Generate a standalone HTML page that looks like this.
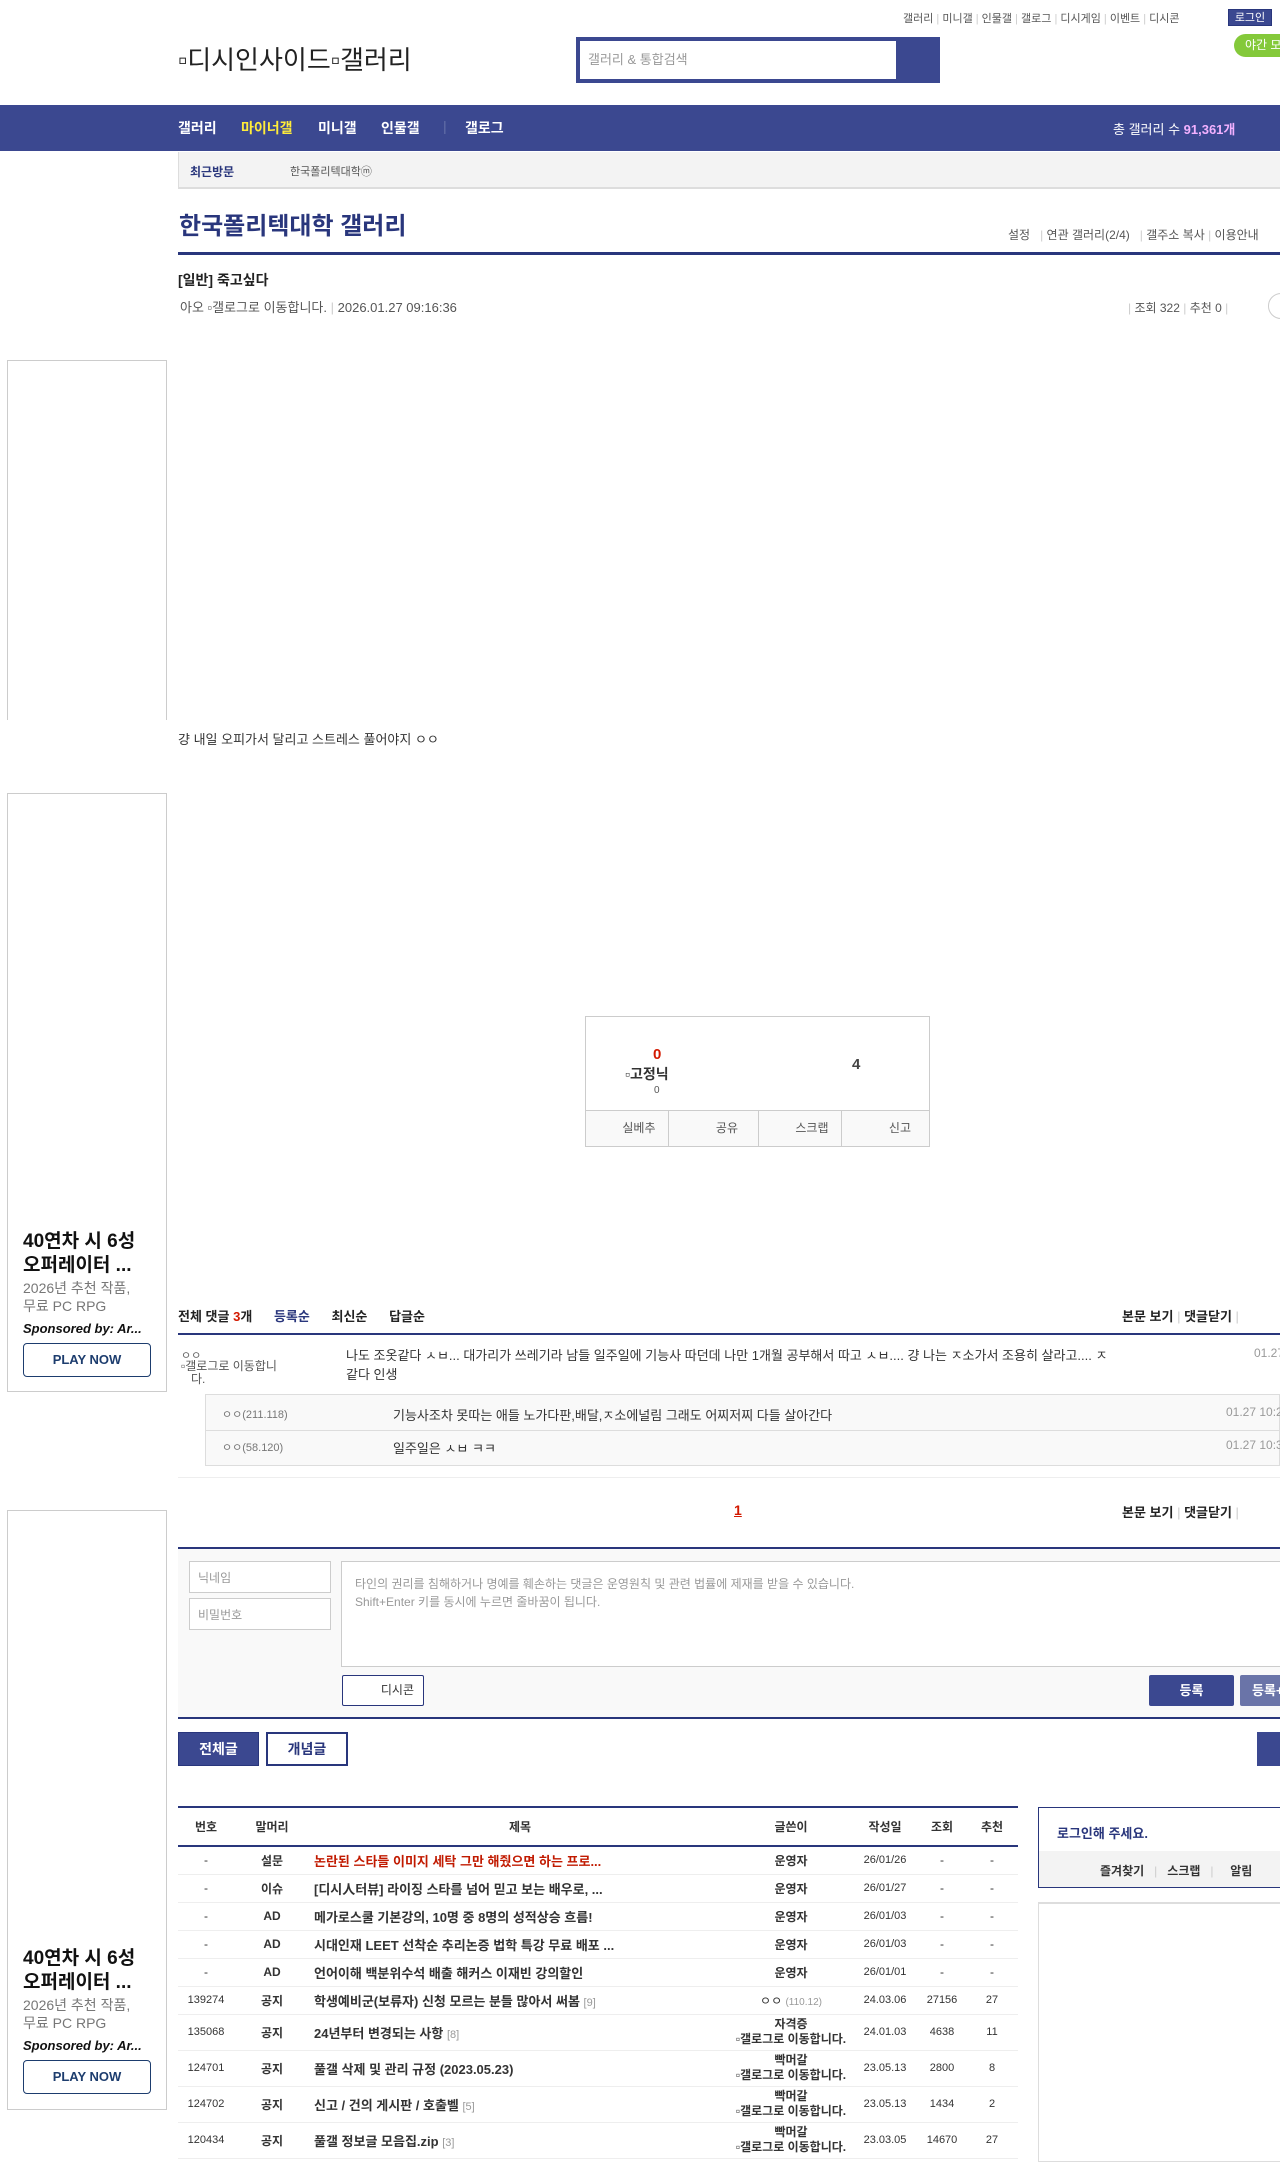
<!DOCTYPE html>
<html><head><meta charset="utf-8">
<style>
*{margin:0;padding:0;box-sizing:border-box}
body{width:1280px;height:2156px;position:relative;overflow:hidden;background:#fff;font-family:"Liberation Sans","Noto Sans CJK KR",sans-serif;color:#333;font-size:13px}
.a{position:absolute;white-space:nowrap}
.navy{color:#29367c}
.ad{position:absolute;left:7px;width:160px;border:1px solid #ccc;background:#fff}
.adt{position:absolute;left:15px;font-weight:bold;font-size:19px;line-height:24px;color:#111;white-space:normal;width:122px}
.ads{position:absolute;left:15px;font-size:14px;color:#777;line-height:18px}
.play{position:absolute;left:15px;width:128px;height:34px;border:1px solid #1d3d6e;border-radius:4px;color:#1d3d6e;font-weight:bold;font-size:13px;text-align:center;line-height:32px}
table{border-collapse:collapse}
.tb td{height:28px;border-bottom:1px solid #eee;font-size:12px;text-align:center}
.tb td.t{text-align:left;font-weight:bold;font-size:13px;padding-left:4px}
.nv{position:absolute;top:118px;font-size:14px;font-weight:bold;color:#fff}
</style></head><body>
<div class="a" style="left:903px;top:10px;font-size:11px;color:#555">갤러리 <span style="color:#ccc">|</span> 미니갤 <span style="color:#ccc">|</span> 인물갤 <span style="color:#ccc">|</span> 갤로그 <span style="color:#ccc">|</span> 디시게임 <span style="color:#ccc">|</span> 이벤트 <span style="color:#ccc">|</span> 디시콘</div>
<div class="a" style="left:1228px;top:9px;width:44px;height:17px;background:#3b4890;color:#fff;font-size:11px;text-align:center;line-height:17px;border:1px solid #29367c">로그인</div>
<div class="a" style="left:1234px;top:34px;width:60px;height:23px;background:#84c93a;border-radius:12px;color:#fff;font-size:12px;line-height:23px;padding-left:11px">야간 모드</div>
<div class="a" style="left:178px;top:40px;font-size:26px;color:#222">▫디시인사이드▫갤러리</div>
<div class="a" style="left:576px;top:37px;width:364px;height:46px;background:#3b4890"></div>
<div class="a" style="left:580px;top:41px;width:316px;height:38px;background:#fff;font-size:13px;color:#999;line-height:38px;padding-left:8px">갤러리 &amp; 통합검색</div>
<div class="a" style="left:0;top:105px;width:1280px;height:46px;background:#3b4890"></div>
<div class="nv" style="left:178px">갤러리</div>
<div class="nv" style="left:241px;color:#ffec3a">마이너갤</div>
<div class="nv" style="left:318px">미니갤</div>
<div class="nv" style="left:381px">인물갤</div>
<div class="nv" style="left:443px;color:#6570a8;font-weight:normal">|</div>
<div class="nv" style="left:465px">갤로그</div>
<div class="a" style="left:1113px;top:119px;font-size:13px;color:#fff">총 갤러리 수 <b style="color:#f3b1ff">91,361개</b></div>
<div class="a" style="left:178px;top:152px;width:1102px;height:37px;background:#f3f3f3;border-left:1px solid #ddd;border-bottom:2px solid #ddd"></div>
<div class="a navy" style="left:190px;top:163px;font-size:12px;font-weight:bold">최근방문</div>
<div class="a" style="left:290px;top:163px;font-size:11px;color:#555">한국폴리텍대학ⓜ</div>
<div class="a navy" style="left:179px;top:206px;font-size:24px;font-weight:bold">한국폴리텍대학 갤러리</div>
<div class="a" style="left:1008px;top:226px;font-size:12px;color:#555">설정 &nbsp;&nbsp;<span style="color:#ccc">|</span> 연관 갤러리(2/4) &nbsp;&nbsp;<span style="color:#ccc">|</span> 갤주소 복사 <span style="color:#ccc">|</span> 이용안내</div>
<div class="a" style="left:178px;top:252px;width:1102px;height:3px;background:#29367c"></div>
<div class="a" style="left:178px;top:270px;font-size:14px;font-weight:bold;color:#222">[일반] 죽고싶다</div>
<div class="a" style="left:180px;top:297px;font-size:13px;color:#555">아오 ▫갤로그로 이동합니다. <span style="color:#ccc">|</span> 2026.01.27 09:16:36</div>
<div class="a" style="left:1128px;top:299px;font-size:12px;color:#555"><span style="color:#ccc">|</span> 조회 322 <span style="color:#ccc">|</span> 추천 0 <span style="color:#ccc">|</span></div>
<div class="a" style="left:1268px;top:293px;width:30px;height:26px;border:1px solid #ccc;border-radius:13px"></div>
<div class="ad" style="top:360px;height:360px;border-bottom:none"></div>
<div class="a" style="left:178px;top:729px;font-size:13px;color:#333">걍 내일 오피가서 달리고 스트레스 풀어야지 ㅇㅇ</div>
<div class="ad" style="top:793px;height:599px">
<div class="adt" style="top:436px">40연차 시 6성 오퍼레이터 ...</div>
<div class="ads" style="top:485px">2026년 추천 작품,<br>무료 PC RPG</div>
<div class="a" style="left:15px;top:527px;font-size:13px;font-weight:bold;font-style:italic;color:#111">Sponsored by: Ar...</div>
<div class="play" style="top:549px">PLAY NOW</div>
</div>
<div class="ad" style="top:1510px;height:600px">
<div class="adt" style="top:436px">40연차 시 6성 오퍼레이터 ...</div>
<div class="ads" style="top:485px">2026년 추천 작품,<br>무료 PC RPG</div>
<div class="a" style="left:15px;top:527px;font-size:13px;font-weight:bold;font-style:italic;color:#111">Sponsored by: Ar...</div>
<div class="play" style="top:549px">PLAY NOW</div>
</div>
<div class="a" style="left:585px;top:1016px;width:345px;height:131px;border:1px solid #ccc"></div>
<div class="a" style="left:653px;top:1046px;font-size:15px;font-weight:bold;color:#d31900">0</div>
<div class="a" style="left:625px;top:1064px;font-size:14px;font-weight:bold;color:#333">▫고정닉</div>
<div class="a" style="left:654px;top:1085px;font-size:10px;color:#555">0</div>
<div class="a" style="left:852px;top:1056px;font-size:15px;font-weight:bold;color:#444">4</div>
<div class="a" style="left:586px;top:1110px;width:343px;height:36px;background:#f9f9f9;border-top:1px solid #ccc;display:flex">
<div style="flex:1;border-right:1px solid #ccc;text-align:right;padding-right:12px;line-height:35px;font-size:12px;color:#555">실베추</div>
<div style="flex:1;border-right:1px solid #ccc;text-align:right;padding-right:20px;line-height:35px;font-size:12px;color:#555">공유</div>
<div style="flex:1;border-right:1px solid #ccc;text-align:right;padding-right:12px;line-height:35px;font-size:12px;color:#555">스크랩</div>
<div style="flex:1;text-align:right;padding-right:18px;line-height:35px;font-size:12px;color:#555">신고</div>
</div>
<div class="a" style="left:178px;top:1306px;font-size:13px;font-weight:bold;color:#222">전체 댓글 <span style="color:#d31900">3</span>개 &nbsp;&nbsp;&nbsp;&nbsp; <span class="navy">등록순</span> &nbsp;&nbsp;&nbsp;&nbsp; 최신순 &nbsp;&nbsp;&nbsp;&nbsp; 답글순</div>
<div class="a" style="left:1122px;top:1306px;font-size:13px;font-weight:bold;color:#222">본문 보기 <span style="color:#ccc;font-weight:normal">|</span> 댓글닫기 <span style="color:#ccc;font-weight:normal">|</span></div>
<div class="a" style="left:178px;top:1333px;width:1102px;height:2px;background:#29367c"></div>
<div class="a" style="left:181px;top:1347px;font-size:11px;color:#666">ㅇㅇ</div>
<div class="a" style="left:181px;top:1360px;font-size:12px;color:#555;line-height:13px">▫갤로그로 이동합니<br>&nbsp;&nbsp;&nbsp;다.</div>
<div class="a" style="left:346px;top:1346px;font-size:13px;color:#333;line-height:19px">나도 조옷같다 ㅅㅂ... 대가리가 쓰레기라 남들 일주일에 기능사 따던데 나만 1개월 공부해서 따고 ㅅㅂ.... 걍 나는 ㅈ소가서 조용히 살라고.... ㅈ<br>같다 인생</div>
<div class="a" style="left:1254px;top:1346px;font-size:12px;color:#999">01.27</div>
<div class="a" style="left:205px;top:1394px;width:1075px;height:72px;background:#f9f9f9;border:1px solid #ddd"></div>
<div class="a" style="left:205px;top:1430px;width:1075px;height:1px;background:#ddd"></div>
<div class="a" style="left:222px;top:1406px;font-size:11px;color:#777">ㅇㅇ(211.118)</div>
<div class="a" style="left:393px;top:1405px;font-size:13px;color:#333">기능사조차 못따는 애들 노가다판,배달,ㅈ소에널림 그래도 어찌저찌 다들 살아간다</div>
<div class="a" style="left:1226px;top:1405px;font-size:12px;color:#999">01.27 10:24</div>
<div class="a" style="left:222px;top:1439px;font-size:11px;color:#777">ㅇㅇ(58.120)</div>
<div class="a" style="left:393px;top:1438px;font-size:13px;color:#333">일주일은 ㅅㅂ ㅋㅋ</div>
<div class="a" style="left:1226px;top:1438px;font-size:12px;color:#999">01.27 10:35</div>
<div class="a" style="left:178px;top:1477px;width:1102px;height:1px;background:#eee"></div>
<div class="a" style="left:734px;top:1502px;font-size:14px;font-weight:bold;color:#d31900;text-decoration:underline">1</div>
<div class="a" style="left:1122px;top:1502px;font-size:13px;font-weight:bold;color:#222">본문 보기 <span style="color:#ccc;font-weight:normal">|</span> 댓글닫기 <span style="color:#ccc;font-weight:normal">|</span></div>
<div class="a" style="left:178px;top:1547px;width:1102px;height:172px;background:#f9f9f9;border-top:2px solid #29367c;border-bottom:2px solid #29367c"></div>
<div class="a" style="left:189px;top:1561px;width:142px;height:32px;background:#fff;border:1px solid #ccc;font-size:12px;color:#999;padding:7px 8px">닉네임</div>
<div class="a" style="left:189px;top:1598px;width:142px;height:32px;background:#fff;border:1px solid #ccc;font-size:12px;color:#999;padding:7px 8px">비밀번호</div>
<div class="a" style="left:341px;top:1561px;width:945px;height:106px;background:#fff;border:1px solid #ccc;font-size:12px;color:#999;padding:13px 13px;line-height:18px">타인의 권리를 침해하거나 명예를 훼손하는 댓글은 운영원칙 및 관련 법률에 제재를 받을 수 있습니다.<br>Shift+Enter 키를 동시에 누르면 줄바꿈이 됩니다.</div>
<div class="a" style="left:342px;top:1675px;width:82px;height:31px;background:#fff;border:1px solid #29367c;border-radius:2px;font-size:12px;color:#333;text-align:right;padding-right:9px;line-height:29px">디시콘</div>
<div class="a" style="left:1149px;top:1675px;width:85px;height:31px;background:#3b4890;border-radius:2px;font-size:13px;font-weight:bold;color:#fff;text-align:center;line-height:31px">등록</div>
<div class="a" style="left:1240px;top:1675px;width:50px;height:31px;background:#6a74a8;border-radius:2px;font-size:13px;font-weight:bold;color:#fff;line-height:31px;padding-left:12px">등록+추천</div>
<div class="a" style="left:178px;top:1732px;width:81px;height:34px;background:#3b4890;border:1px solid #29367c;font-size:14px;font-weight:bold;color:#fff;text-align:center;line-height:32px">전체글</div>
<div class="a" style="left:266px;top:1732px;width:82px;height:34px;background:#fff;border:2px solid #29367c;font-size:14px;font-weight:bold;color:#29367c;text-align:center;line-height:30px">개념글</div>
<div class="a" style="left:1257px;top:1732px;width:40px;height:34px;background:#3b4890"></div>
<div class="a" style="left:178px;top:1806px;width:840px;height:2px;background:#29367c"></div>
<table class="a tb" style="left:178px;top:1808px;width:840px;table-layout:fixed">
<colgroup><col style="width:56px"><col style="width:76px"><col style="width:420px"><col style="width:122px"><col style="width:66px"><col style="width:48px"><col style="width:52px"></colgroup>
<tr style="height:38px"><td style="height:38px;font-weight:bold;border-bottom:2px solid #29367c">번호</td><td style="font-weight:bold;border-bottom:2px solid #29367c">말머리</td><td style="font-weight:bold;border-bottom:2px solid #29367c">제목</td><td style="font-weight:bold;border-bottom:2px solid #29367c">글쓴이</td><td style="font-weight:bold;border-bottom:2px solid #29367c">작성일</td><td style="font-weight:bold;border-bottom:2px solid #29367c">조회</td><td style="font-weight:bold;border-bottom:2px solid #29367c">추천</td></tr>
<tr><td>-</td><td><b>설문</b></td><td class="t" style="color:#c11a00">논란된 스타들 이미지 세탁 그만 해줬으면 하는 프로...</td><td><b>운영자</b></td><td style="font-size:11px">26/01/26</td><td>-</td><td>-</td></tr>
<tr><td>-</td><td><b>이슈</b></td><td class="t">[디시人터뷰] 라이징 스타를 넘어 믿고 보는 배우로, ...</td><td><b>운영자</b></td><td style="font-size:11px">26/01/27</td><td>-</td><td>-</td></tr>
<tr><td>-</td><td><b>AD</b></td><td class="t">메가로스쿨 기본강의, 10명 중 8명의 성적상승 흐름!</td><td><b>운영자</b></td><td style="font-size:11px">26/01/03</td><td>-</td><td>-</td></tr>
<tr><td>-</td><td><b>AD</b></td><td class="t">시대인재 LEET 선착순 추리논증 법학 특강 무료 배포 ...</td><td><b>운영자</b></td><td style="font-size:11px">26/01/03</td><td>-</td><td>-</td></tr>
<tr><td>-</td><td><b>AD</b></td><td class="t">언어이해 백분위수석 배출 해커스 이재빈 강의할인</td><td><b>운영자</b></td><td style="font-size:11px">26/01/01</td><td>-</td><td>-</td></tr>
<tr><td style="font-size:11px">139274</td><td><b>공지</b></td><td class="t">학생예비군(보류자) 신청 모르는 분들 많아서 써봄 <span style="color:#999;font-weight:normal;font-size:11px">[9]</span></td><td>ㅇㅇ <span style="font-size:10px;color:#999">(110.12)</span></td><td style="font-size:11px">24.03.06</td><td style="font-size:11px">27156</td><td style="font-size:11px">27</td></tr>
<tr style="height:36px"><td style="font-size:11px;height:36px">135068</td><td><b>공지</b></td><td class="t">24년부터 변경되는 사항 <span style="color:#999;font-weight:normal;font-size:11px">[8]</span></td><td style="line-height:15px;white-space:nowrap"><b>자격증</b><br><b>▫갤로그로 이동합니다.</b></td><td style="font-size:11px">24.01.03</td><td style="font-size:11px">4638</td><td style="font-size:11px">11</td></tr>
<tr style="height:36px"><td style="font-size:11px;height:36px">124701</td><td><b>공지</b></td><td class="t">풀갤 삭제 및 관리 규정 (2023.05.23)</td><td style="line-height:15px;white-space:nowrap"><b>빡머갈</b><br><b>▫갤로그로 이동합니다.</b></td><td style="font-size:11px">23.05.13</td><td style="font-size:11px">2800</td><td style="font-size:11px">8</td></tr>
<tr style="height:36px"><td style="font-size:11px;height:36px">124702</td><td><b>공지</b></td><td class="t">신고 / 건의 게시판 / 호출벨 <span style="color:#999;font-weight:normal;font-size:11px">[5]</span></td><td style="line-height:15px;white-space:nowrap"><b>빡머갈</b><br><b>▫갤로그로 이동합니다.</b></td><td style="font-size:11px">23.05.13</td><td style="font-size:11px">1434</td><td style="font-size:11px">2</td></tr>
<tr style="height:36px"><td style="font-size:11px;height:36px">120434</td><td><b>공지</b></td><td class="t">풀갤 정보글 모음집.zip <span style="color:#999;font-weight:normal;font-size:11px">[3]</span></td><td style="line-height:15px;white-space:nowrap"><b>빡머갈</b><br><b>▫갤로그로 이동합니다.</b></td><td style="font-size:11px">23.03.05</td><td style="font-size:11px">14670</td><td style="font-size:11px">27</td></tr>
</table>
<div class="a" style="left:1038px;top:1807px;width:260px;height:81px;border:1px solid #29367c;background:#fff"></div>
<div class="a" style="left:1039px;top:1851px;width:250px;height:36px;background:#f3f3f3"></div>
<div class="a navy" style="left:1057px;top:1823px;font-size:13px;font-weight:bold">로그인해 주세요.</div>
<div class="a" style="left:1100px;top:1862px;font-size:12px;font-weight:bold;color:#333">즐겨찾기 <span style="color:#ccc;font-weight:normal">&nbsp;&nbsp;|&nbsp;&nbsp;</span> 스크랩 <span style="color:#ccc;font-weight:normal">&nbsp;&nbsp;|&nbsp;&nbsp;</span> &nbsp;&nbsp;알림</div>
<div class="a" style="left:1038px;top:1902px;width:260px;height:260px;border:1px solid #ddd;border-top:2px solid #ddd"></div>
</body></html>
